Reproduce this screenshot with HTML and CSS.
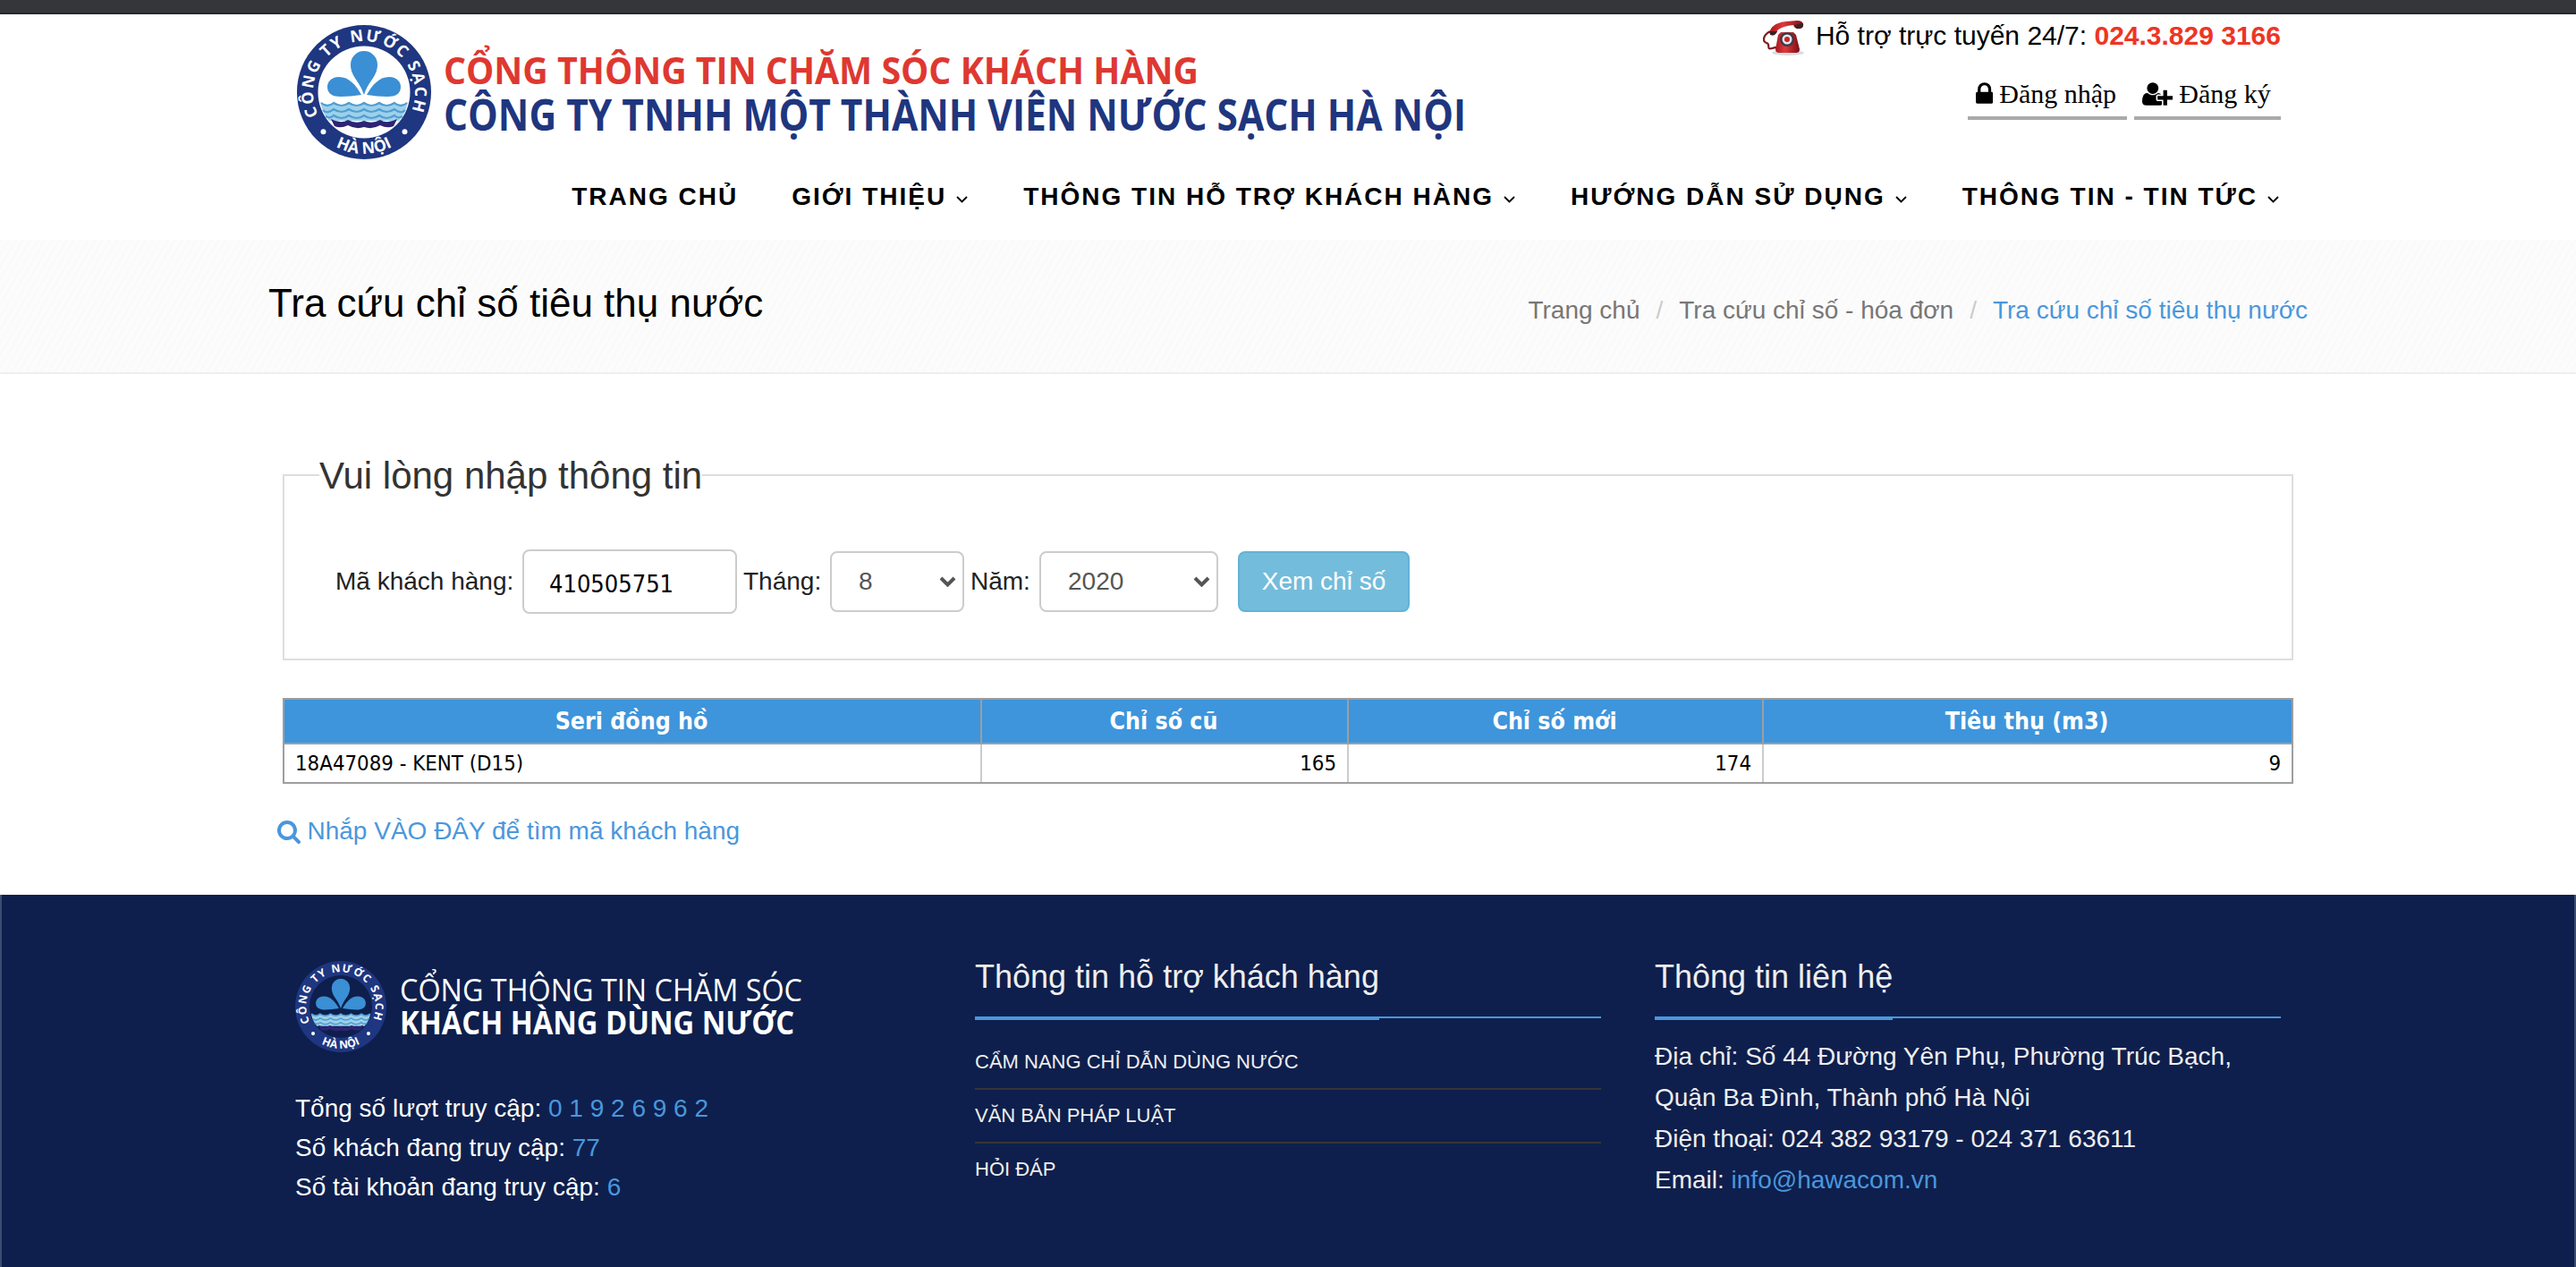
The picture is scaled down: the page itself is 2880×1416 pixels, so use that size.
FILE: index.html
```html
<!DOCTYPE html>
<html lang="vi">
<head>
<meta charset="utf-8">
<title>Tra cứu chỉ số tiêu thụ nước</title>
<link rel="stylesheet" href="styles.css">
</head>
<body>
<svg class="defs" width="0" height="0" aria-hidden="true">
  <defs>
    <path id="arc-top" d="M-51 25.500A57 57 0 1 1 51 25.500"/>
    <path id="arc-bottom" d="M-61 32A69 69 0 0 0 61 32"/>
    <symbol id="seal" viewBox="-75 -75 150 150">
      <circle r="75" fill="#1f3680"/>
      <circle class="seal-core" r="51.500"/>
      <g fill="#3b8fd4">
        <path d="M0 3C-5-13-15-17-15-31A15 15 0 0 1 15-31C15-17 5-13 0 3Z"/>
        <path d="M-3 3C-9-8-17-17-28-17C-37-17-41-11-41-6C-41 2-35 5-26 5Q-15 5-3 3Z"/>
        <path d="M3 3C9-8 17-17 28-17C37-17 41-11 41-6C41 2 35 5 26 5Q15 5 3 3Z"/>
      </g>
      <path fill="#9fd0ea" d="M-49 11Q-41 17-34 12Q-25 17-17 12Q-8 17 0 12Q8 17 17 12Q25 17 34 12Q41 17 49 11Q46 25 39 32H-39Q-46 25-49 11Z"/>
      <g fill="none" stroke="#4f9fd3" stroke-width="2.200">
        <path d="M-48 12Q-41 18-34 12Q-25 18-17 12Q-8 18 0 12Q8 18 17 12Q25 18 34 12Q41 18 48 12"/>
        <path d="M-46 20Q-41 25-34 19Q-25 25-17 19Q-8 25 0 19Q8 25 17 19Q25 25 34 19Q41 25 46 20"/>
        <path d="M-43 27Q-38 30-34 26Q-25 32-17 26Q-8 32 0 26Q8 32 17 26Q25 32 34 26Q38 30 43 27"/>
      </g>
      <path fill="#2e2372" d="M-37 30Q-26 36-18 31Q-9 36 0 32Q9 36 18 31Q26 36 37 30L33 38Q26 41 18 37Q9 42 0 39Q-9 42-18 37Q-26 41-33 38Z"/>
      <g class="seal-text">
        <text><textPath href="#arc-top" textLength="226" lengthAdjust="spacing">CÔNG TY NƯỚC SẠCH</textPath></text>
        <text text-anchor="middle"><textPath href="#arc-bottom" startOffset="50%">HÀ NỘI</textPath></text>
      </g>
      <circle cx="-45.500" cy="44.300" r="3" fill="#fff"/>
      <circle cx="45.500" cy="44.300" r="3" fill="#fff"/>
    </symbol>
    <symbol id="chevron" viewBox="0 0 13 8"><path d="M1 1L6.500 6.500L12 1" fill="none" stroke="#000" stroke-width="1.800"/></symbol>
    <symbol id="select-arrow" viewBox="0 0 19 12"><path d="M2 2L9.500 9.500L17 2" fill="none" stroke="#555" stroke-width="4"/></symbol>
    <linearGradient id="red" x1="0" y1="0" x2="1" y2="0">
      <stop offset="0" stop-color="#a81820"/><stop offset=".4" stop-color="#dd3a3c"/><stop offset="1" stop-color="#7d0d14"/>
    </linearGradient>
  </defs>
</svg>

<div class="topbar"></div>
<header class="header">
  <div class="header-top">
    <svg class="logo" viewBox="0 0 1310 150">
      <use href="#seal" width="150" height="150"/>
      <g class="logo-text">
        <text x="164" y="66" font-size="42" fill="#de3831" textLength="844" lengthAdjust="spacingAndGlyphs">CỔNG THÔNG TIN CHĂM SÓC KHÁCH HÀNG</text>
        <text x="164" y="118" font-size="47.500" fill="#1f367f" textLength="1143" lengthAdjust="spacingAndGlyphs">CÔNG TY TNHH MỘT THÀNH VIÊN NƯỚC SẠCH HÀ NỘI</text>
      </g>
    </svg>
    <div class="account">
      <p class="hotline">
        <svg class="phone" viewBox="0 0 48 40">
          <ellipse cx="28" cy="36" rx="18" ry="3" fill="#d9dbe6"/>
          <path d="M8 12C0 16-1 24 4 25S3 33 10 31S15 30 16 30" fill="none" stroke="#7d1a1e" stroke-width="2.200"/>
          <path d="M17 16L20 13H34L37 16L41 32Q41 36 37 36H18Q14 36 14 32Z" fill="url(#red)"/>
          <path d="M8 16C6 8 14 2 26 1L38 0Q45 0 45 5Q45 9 40 9Q35 9 34 5Q22 6 16 11Q16 17 8 16Z" fill="url(#red)"/>
          <path d="M35 5Q36 10 41 9Q46 8 45 3ZM7 12Q8 18 13 16L16 12Z" fill="#3a2226"/>
          <circle cx="27" cy="21" r="8" fill="#3f3a44"/>
          <circle cx="27" cy="21" r="5.500" fill="#e6e6ee"/>
          <circle cx="27" cy="21" r="3" fill="#c92428"/>
        </svg>
        <span>Hỗ trợ trực tuyến 24/7: <b>024.3.829 3166</b></span>
      </p>
      <div class="auth">
        <a class="auth-link login"><svg width="19.300" height="30" viewBox="320 0 1152 1792"><path d="M640 768h512v-192q0-106-75-181t-181-75-181 75-75 181v192zm832 96v576q0 40-28 68t-68 28h-960q-40 0-68-28t-28-68v-576q0-40 28-68t68-28h32v-192q0-184 132-316t316-132 316 132 132 316v192h32q40 0 68 28t28 68z"/></svg>Đăng nhập</a>
        <a class="auth-link register"><svg width="34.300" height="30" viewBox="0 0 2048 1792"><path d="M704 896q-159 0-271.500-112.500t-112.500-271.500 112.500-271.500 271.500-112.500 271.500 112.500 112.500 271.500-112.500 271.500-271.500 112.500zm960 128h352q13 0 22.500 9.500t9.500 22.500v192q0 13-9.500 22.500t-22.500 9.500h-352v352q0 13-9.500 22.500t-22.500 9.500h-192q-13 0-22.500-9.500t-9.500-22.500v-352h-352q-13 0-22.500-9.500t-9.500-22.500v-192q0-13 9.500-22.500t22.500-9.500h352v-352q0-13 9.500-22.500t22.500-9.500h192q13 0 22.500 9.500t9.500 22.500v352zm-736 224q0 52 38 90t90 38h256v238q-68 50-171 50h-874q-121 0-194-69t-73-190q0-53 3.500-103.500t14-109 26.500-108.500 43-97.500 62-81 85.500-53.500 111.500-20q19 0 39 17 79 61 154.500 91.500t164.500 30.500 164.500-30.500 154.500-91.500q20-17 39-17 132 0 217 96h-223q-52 0-90 38t-38 90v192z"/></svg>Đăng ký</a>
      </div>
    </div>
  </div>
  <nav class="nav">
    <a class="home">TRANG CHỦ</a>
    <a>GIỚI THIỆU<svg width="13" height="8"><use href="#chevron"/></svg></a>
    <a>THÔNG TIN HỖ TRỢ KHÁCH HÀNG<svg width="13" height="8"><use href="#chevron"/></svg></a>
    <a>HƯỚNG DẪN SỬ DỤNG<svg width="13" height="8"><use href="#chevron"/></svg></a>
    <a>THÔNG TIN - TIN TỨC<svg width="13" height="8"><use href="#chevron"/></svg></a>
  </nav>
</header>

<section class="page-title">
  <div class="page-title-inner">
    <h1>Tra cứu chỉ số tiêu thụ nước</h1>
    <ol class="breadcrumb">
      <li>Trang chủ</li>
      <li>Tra cứu chỉ số - hóa đơn</li>
      <li class="current">Tra cứu chỉ số tiêu thụ nước</li>
    </ol>
  </div>
</section>

<main class="content">
  <fieldset class="lookup">
    <legend>Vui lòng nhập thông tin</legend>
    <div class="form-row">
      <label class="label-code" for="code">Mã khách hàng:</label>
      <input id="code" class="code" type="text" value="410505751">
      <span class="label-month">Tháng:</span>
      <div class="select month" role="combobox">8<svg width="19" height="12"><use href="#select-arrow"/></svg></div>
      <span class="label-year">Năm:</span>
      <div class="select year" role="combobox">2020<svg width="19" height="12"><use href="#select-arrow"/></svg></div>
      <button class="submit" type="button">Xem chỉ số</button>
    </div>
  </fieldset>

  <table class="readings">
    <colgroup><col class="col-serial"><col class="col-old"><col class="col-new"><col class="col-used"></colgroup>
    <thead><tr><th>Seri đồng hồ</th><th>Chỉ số cũ</th><th>Chỉ số mới</th><th>Tiêu thụ (m3)</th></tr></thead>
    <tbody><tr><td class="serial">18A47089 - KENT (D15)</td><td>165</td><td>174</td><td>9</td></tr></tbody>
  </table>

  <a class="find-code"><svg width="28" height="28" viewBox="0 0 1792 1792"><path d="M1216 832q0-185-131.500-316.500t-316.500-131.500-316.500 131.500-131.500 316.500 131.500 316.500 316.500 131.500 316.500-131.500 131.500-316.500zm512 832q0 52-38 90t-90 38q-54 0-90-38l-343-342q-179 124-399 124-143 0-273.500-55.500t-225-150-150-225-55.500-273.500 55.500-273.500 150-225 225-150 273.500-55.500 273.500 55.500 225 150 150 225 55.500 273.500q0 220-124 399l343 343q37 37 37 90z"/></svg>Nhắp VÀO ĐÂY để tìm mã khách hàng</a>
</main>

<footer class="footer">
  <div class="footer-brand">
    <svg class="footer-logo" viewBox="0 0 570 102">
      <use href="#seal" width="102" height="102"/>
      <g class="logo-text" fill="#fff" font-size="35">
        <text class="thin" x="117" y="45" textLength="450" lengthAdjust="spacingAndGlyphs">CỔNG THÔNG TIN CHĂM SÓC</text>
        <text x="117" y="82" textLength="441" lengthAdjust="spacingAndGlyphs">KHÁCH HÀNG DÙNG NƯỚC</text>
      </g>
    </svg>
    <p>Tổng số lượt truy cập: <span class="accent">0 1 9 2 6 9 6 2</span></p>
    <p>Số khách đang truy cập: <span class="accent">77</span></p>
    <p>Số tài khoản đang truy cập: <span class="accent">6</span></p>
  </div>
  <div class="footer-col">
    <h3><span>Thông tin hỗ trợ khách hàng</span></h3>
    <ul class="footer-links">
      <li>CẨM NANG CHỈ DẪN DÙNG NƯỚC</li>
      <li>VĂN BẢN PHÁP LUẬT</li>
      <li>HỎI ĐÁP</li>
    </ul>
  </div>
  <div class="footer-col">
    <h3><span>Thông tin liên hệ</span></h3>
    <address>
      Địa chỉ: Số 44 Đường Yên Phụ, Phường Trúc Bạch,<br>
      Quận Ba Đình, Thành phố Hà Nội<br>
      Điện thoại: 024 382 93179 - 024 371 63611<br>
      Email: <span class="accent">info@hawacom.vn</span>
    </address>
  </div>
</footer>
</body>
</html>
```
FILE: styles.css
```css
* { box-sizing: border-box; }

body {
  margin: 0;
  background: #fff;
  color: #222;
  font: 28px/40px "Liberation Sans", Arial, sans-serif;
}

h1, h3, p, ul, ol { margin: 0; padding: 0; font-weight: 400; }
ul, ol { list-style: none; }
svg { display: block; flex: none; }
.defs { position: absolute; }

.topbar {
  height: 16px;
  background: #35363a;
  border-bottom: 2px solid #272729;
}

/* Header */
.header {
  width: 2220px;
  height: 252px;
  margin: 0 auto;
}
.header-top {
  display: flex;
  justify-content: space-between;
  height: 184px;
}
.logo { width: 1310px; height: 150px; margin: 12px 0 0 2px; }
.logo-text { font-family: "Open Sans", "Noto Sans", sans-serif; font-weight: 700; }
.logo-text .thin { font-weight: 400; }
.seal-core { fill: var(--seal-core, #fff); }
.seal-text { fill: #fff; font: 700 18px "Open Sans", sans-serif; }

.account { display: flex; flex-direction: column; align-items: flex-end; color: #000; }
.hotline { display: flex; margin-top: 4px; font-size: 30px; }
.hotline b { color: #ee3524; }
.phone { width: 48px; height: 40px; margin: 3px 11px 0 0; }
.auth { display: flex; gap: 8px; margin-top: 23px; font: 30px/38px "Liberation Serif", "Times New Roman", serif; }
.auth-link {
  display: flex;
  gap: 7px;
  height: 48px;
  padding: 0 9px;
  border-bottom: 4px solid #aaa;
  white-space: nowrap;
}
.login { width: 178px; }
.register { width: 164px; }
.auth-link svg { margin-top: 4px; }

.nav {
  display: flex;
  justify-content: flex-end;
  gap: 62px;
  padding-right: 2px;
  color: #000;
  font-weight: 700;
  letter-spacing: 2px;
}
.nav a { display: flex; white-space: nowrap; }
.nav .home { margin-right: -2px; }
.nav svg { margin: 19px 0 0 11px; }

/* Page title */
.page-title {
  height: 150px;
  border-bottom: 2px solid #eee;
  background: repeating-linear-gradient(120deg, #fafafa 0 3px, #fcfcfc 3px 7px);
}
.page-title-inner {
  display: flex;
  justify-content: space-between;
  width: 2280px;
  margin: 0 auto;
}
.page-title h1 { margin-top: 46px; color: #000; font-size: 44px; line-height: 50px; }
.breadcrumb { display: flex; margin-top: 59px; color: #777; }
.breadcrumb li + li::before { content: "/"; padding: 0 18px; color: #ccc; }
.breadcrumb .current { color: #4a97dc; }

/* Lookup form */
.content { width: 2248px; height: 582px; margin: 0 auto; padding-top: 92px; }
.lookup {
  min-width: 0;
  height: 228px;
  margin: 0;
  padding: 62px 40px 0 39px;
  border: 2px solid #ddd;
}
.lookup legend { height: 42px; padding: 0; color: #333; font-size: 42px; line-height: 44px; }
.form-row { display: flex; align-items: center; margin-left: 18px; white-space: nowrap; }
.label-code { width: 209px; }
.label-month { width: 97px; margin-left: 7px; }
.label-year { width: 77px; margin-left: 7px; }
.code {
  width: 240px;
  height: 72px;
  padding: 4px 28px 0 28px;
  border: 2px solid #ccc;
  border-radius: 8px;
  color: #000;
  font: 27px "DejaVu Sans Condensed", "DejaVu Sans", sans-serif;
  font-stretch: condensed;
}
.select {
  display: flex;
  align-items: center;
  justify-content: space-between;
  height: 68px;
  padding: 0 7px 0 30px;
  border: 2px solid #ccc;
  border-radius: 8px;
  color: #555;
}
.month { width: 150px; }
.year { width: 200px; }
.submit {
  width: 192px;
  height: 68px;
  margin-left: 22px;
  padding: 0;
  border: 2px solid #62b3d6;
  border-radius: 8px;
  background: #74bcdb;
  color: #fff;
  font: inherit;
}

/* Meter readings */
.readings {
  width: 2248px;
  margin-top: 42px;
  border: 2px solid #9e9e9e;
  border-spacing: 0;
  table-layout: fixed;
  color: #000;
  font-family: "DejaVu Sans Condensed", "DejaVu Sans", sans-serif;
  font-stretch: condensed;
}
.col-serial { width: 780px; }
.col-old { width: 410px; }
.col-new { width: 464px; }
.readings th {
  height: 50px;
  padding: 0 2px 0 0;
  border-right: 2px solid #9e9e9e;
  border-bottom: 2px solid #9e9e9e;
  background: #3e95db;
  color: #fff;
  font-size: 26.5px;
  line-height: 40px;
}
.readings td {
  height: 42px;
  padding: 0 12px;
  border-right: 2px solid #ccc;
  font-size: 23.8px;
  line-height: 40px;
  text-align: right;
}
.readings th:last-child, .readings td:last-child { border-right: 0; }
.readings .serial { text-align: left; }

.find-code { display: flex; align-items: center; gap: 6.5px; margin: 32px 0 0 -7px; color: #4a97dc; line-height: 41px; }
.find-code svg { fill: currentColor; }

/* Footer */
.footer {
  --seal-core: #0e1f4d;
  display: grid;
  grid-template-columns: repeat(3, 700px);
  gap: 60px;
  justify-content: center;
  height: 416px;
  border: solid #3e4c71;
  border-width: 0 2px;
  background: #0e1f4d;
  color: #fff;
}
.footer-brand { padding-top: 74px; line-height: 44px; }
.footer-logo { width: 570px; height: 102px; margin-bottom: 41px; }
.accent { color: #4a97dc; }
.footer-col { padding-top: 70px; color: #eee; }
.footer-col h3 {
  height: 68px;
  border-bottom: 2px solid #4a97dc;
  font-size: 36px;
  line-height: 44px;
}
.footer-col h3 span {
  display: inline-block;
  height: 70px;
  border-bottom: 4px solid #4a97dc;
}
.footer-links { margin-top: 20px; font-size: 22px; line-height: 57px; }
.footer-links li { height: 60px; border-bottom: 2px solid #373636; }
.footer-links li:last-child { border-bottom: 0; }
.footer address { margin-top: 20px; font-style: normal; line-height: 46px; white-space: nowrap; }
```
